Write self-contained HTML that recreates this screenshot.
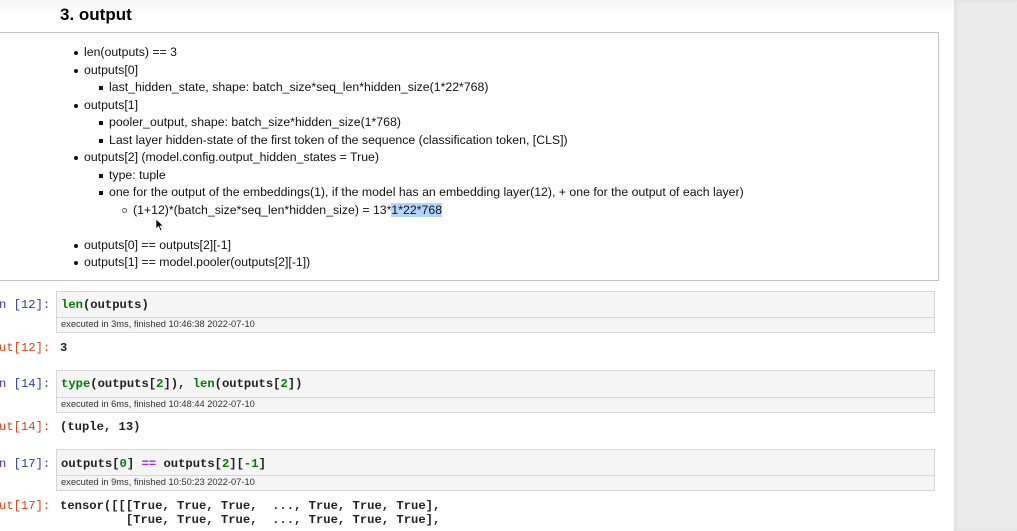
<!DOCTYPE html>
<html><head><style>
body{margin:0;width:1017px;height:531px;overflow:hidden;background:#fff;position:relative;font-family:"Liberation Sans",sans-serif;color:#000}
.side{position:absolute;left:954px;top:0;width:63px;height:531px;background:#ebebeb;box-shadow:inset 2px 0 3px rgba(0,0,0,.06)}
.topfade{position:absolute;left:0;top:0;width:954px;height:14px;background:linear-gradient(#f5f5f5,#fff)}
.a{position:absolute;white-space:pre}
.t{font-size:12.3px;line-height:14px;color:#111}
.md{position:absolute;left:-2px;top:32px;width:941px;height:249px;border:1px solid #c4c4c4;border-left:none;box-sizing:border-box}
.dot{position:absolute;width:4px;height:4px;border-radius:50%;background:#111}
.sq{position:absolute;width:4px;height:4px;background:#111}
.circ{position:absolute;width:5px;height:5px;border-radius:50%;border:1px solid #666;box-sizing:border-box}
.cell{position:absolute;left:56px;width:879px;border:1px solid #d6d6d6;background:#f5f5f5;box-sizing:border-box}
.ex{position:absolute;left:0;right:0;bottom:0;height:14px;border-top:1px solid #d6d6d6;font-size:9.3px;line-height:13px;padding-left:4px;color:#333}
.m{font-family:"Liberation Mono",monospace;font-size:12.2px;line-height:14px;font-weight:bold;color:#222}
.pin{color:#303f9f;font-weight:normal}.pout{color:#d84315;font-weight:normal}
.g{color:#008000;font-weight:bold}.gn{color:#008000}.p{color:#aa22ff;font-weight:bold}
</style></head><body>
<div class="topfade"></div>
<div class="side"></div>
<div class="a" style="left:60px;top:5px;font-size:17px;font-weight:bold;line-height:20px">3. output</div>
<div class="md"></div>

<div class="dot" style="left:74px;top:51px"></div><div class="a t" style="left:84px;top:45px">len(outputs) == 3</div>
<div class="dot" style="left:74px;top:69px"></div><div class="a t" style="left:84px;top:63px">outputs[0]</div>
<div class="sq" style="left:99px;top:86px"></div><div class="a t" style="left:109px;top:80px">last_hidden_state, shape: batch_size*seq_len*hidden_size(1*22*768)</div>
<div class="dot" style="left:74px;top:104px"></div><div class="a t" style="left:84px;top:98px">outputs[1]</div>
<div class="sq" style="left:99px;top:121px"></div><div class="a t" style="left:109px;top:115px">pooler_output, shape: batch_size*hidden_size(1*768)</div>
<div class="sq" style="left:99px;top:139px"></div><div class="a t" style="left:109px;top:133px">Last layer hidden-state of the first token of the sequence (classification token, [CLS])</div>
<div class="dot" style="left:74px;top:156px"></div><div class="a t" style="left:84px;top:150px">outputs[2] (model.config.output_hidden_states = True)</div>
<div class="sq" style="left:99px;top:174px"></div><div class="a t" style="left:109px;top:168px">type: tuple</div>
<div class="sq" style="left:99px;top:191px"></div><div class="a t" style="left:109px;top:185px">one for the output of the embeddings(1), if the model has an embedding layer(12), + one for the output of each layer)</div>
<div class="circ" style="left:122px;top:208px"></div><div class="a t" style="left:133px;top:203px">(1+12)*(batch_size*seq_len*hidden_size) = 13*<span style="background:#b3d4fc">1*22*768</span></div>
<svg style="position:absolute;left:155px;top:218px" width="10" height="14" viewBox="0 0 10 14"><path d="M1 1 L1 11 L3.5 8.5 L5.5 13 L7 12.3 L5 8 L8.5 8 Z" fill="#000" stroke="#fff" stroke-width=".7"/></svg>
<div class="dot" style="left:74px;top:244px"></div><div class="a t" style="left:84px;top:238px">outputs[0] == outputs[2][-1]</div>
<div class="dot" style="left:74px;top:261px"></div><div class="a t" style="left:84px;top:255px">outputs[1] == model.pooler(outputs[2][-1])</div>

<div class="a m pin" style="left:-1px;top:298px">n [12]:</div>
<div class="cell" style="top:291px;height:42px"><div class="a m" style="left:4px;top:6px"><span class="g">len</span>(outputs)</div><div class="ex">executed in 3ms, finished 10:46:38 2022-07-10</div></div>
<div class="a m pout" style="left:-1px;top:341px">ut[12]:</div>
<div class="a m" style="left:60px;top:341px">3</div>

<div class="a m pin" style="left:-1px;top:377px">n [14]:</div>
<div class="cell" style="top:370px;height:43px"><div class="a m" style="left:4px;top:6px"><span class="g">type</span>(outputs[<span class="gn">2</span>]), <span class="g">len</span>(outputs[<span class="gn">2</span>])</div><div class="ex">executed in 6ms, finished 10:48:44 2022-07-10</div></div>
<div class="a m pout" style="left:-1px;top:420px">ut[14]:</div>
<div class="a m" style="left:60px;top:420px">(tuple, 13)</div>

<div class="a m pin" style="left:-1px;top:457px">n [17]:</div>
<div class="cell" style="top:449px;height:42px"><div class="a m" style="left:4px;top:7px">outputs[<span class="gn">0</span>] <span class="p">==</span> outputs[<span class="gn">2</span>][<span class="gn">-1</span>]</div><div class="ex">executed in 9ms, finished 10:50:23 2022-07-10</div></div>
<div class="a m pout" style="left:-1px;top:499px">ut[17]:</div>
<div class="a m" style="left:60px;top:499px">tensor([[[True, True, True,  ..., True, True, True],
         [True, True, True,  ..., True, True, True],</div>
</body></html>
